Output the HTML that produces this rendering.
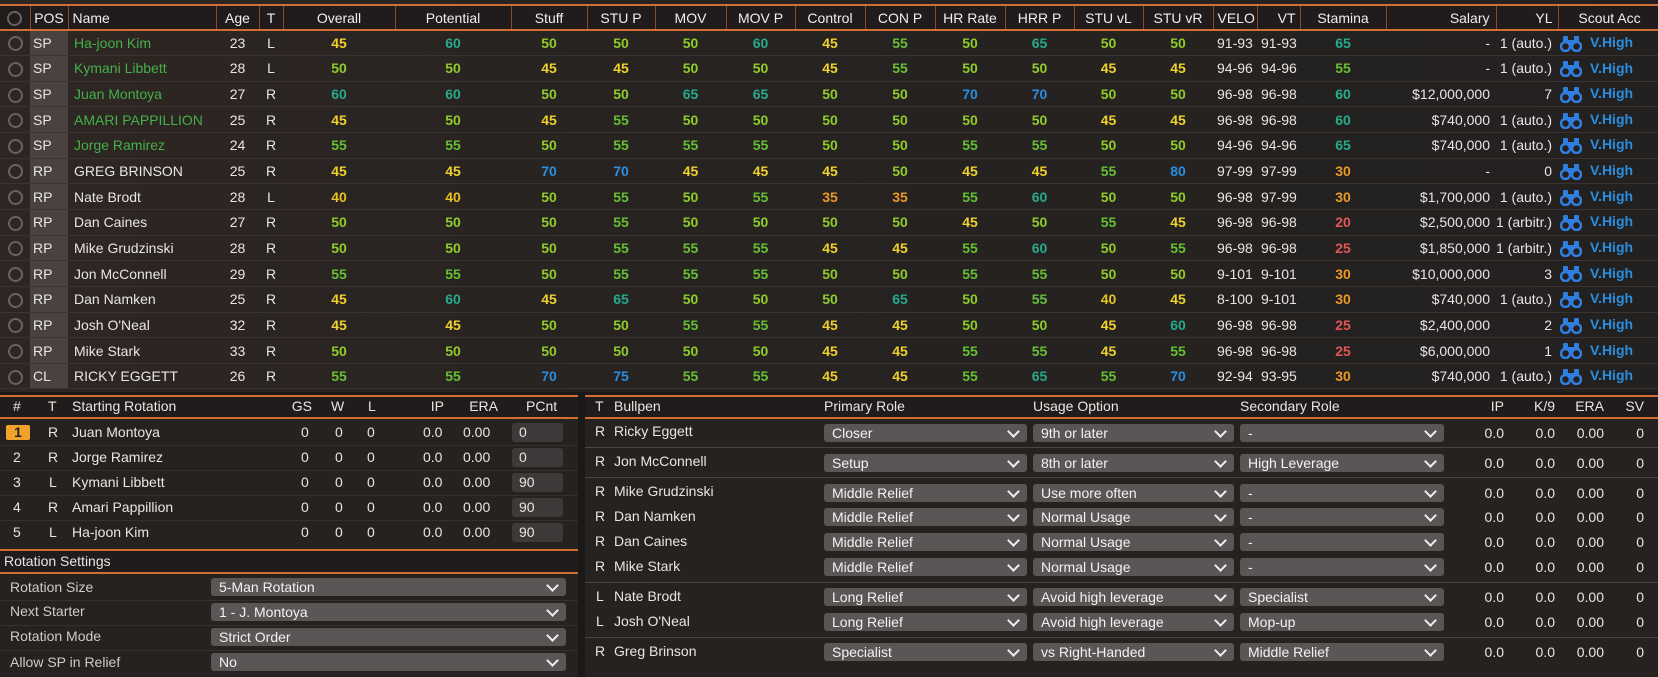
<!DOCTYPE html>
<html><head><meta charset="utf-8"><style>
*{box-sizing:border-box;margin:0;padding:0}
body{width:1658px;height:677px;overflow:hidden;background:#1b1918;font-family:"Liberation Sans",sans-serif;color:#e8e6e4;font-size:14px;position:relative}
.bg{position:absolute;left:0;top:0;width:1658px;height:392px;background:linear-gradient(90deg,#2e2622 0%,#272321 40%,#232120 100%)}
table{border-collapse:collapse;table-layout:fixed;position:absolute}
td,th{white-space:nowrap;overflow:hidden;padding:0}
#top{left:0;top:4px;width:1658px}
#top th{font-weight:normal;height:25px;border-top:2px solid #cf6f35;border-bottom:2px solid #cf6f35;border-right:1px solid #8a4a2a;background:#1f1c1b;color:#eee;font-size:14px;text-align:center}
#top tr.rw td{height:25.65px;border-bottom:1px solid #3a3331;text-align:center;font-weight:bold}
#top tr.rw td.n{text-align:left;padding-left:6px;font-weight:normal}
#top tr.rw td.g{color:#45b04a}
#top tr.rw td.pos{background:#4a4240;text-align:left;padding-left:3px;font-weight:normal}
#top tr.rw td.pl{font-weight:normal}
#top tr.rw td.ve{text-align:left;font-weight:normal;padding-left:4px}
#top tr.rw td.rt{text-align:right;font-weight:normal;padding-right:6px}
#top tr.rw td.sc{text-align:left;color:#2a8ee0}
.cir{display:inline-block;width:15px;height:15px;border:2px solid #6a625e;border-radius:50%;vertical-align:middle}
.a{color:#efd12e}.b{color:#8fcc2a}.c{color:#66c034}.d{color:#25ab8c}.e{color:#2a8ee0}.f{color:#eb9a26}.h{color:#e25656}.k{color:#e6c21e}
.bin{display:inline-block;vertical-align:middle;margin:0 8px 0 2px}
.panel{position:absolute;background:#262220}
.ol{position:absolute;height:2px;background:#cf6f35}
.sep{position:absolute;height:1px;background:#4a4442}
.t{position:absolute;white-space:nowrap;line-height:18px}
.r{text-align:right}
.dd{position:absolute;height:18px;background:#5b5655;border-radius:3px;color:#f2f2f2;padding-left:8px;line-height:18px;font-size:14px}
.dd:after{content:"";position:absolute;right:9px;top:3px;width:7px;height:7px;border-right:2px solid #eee;border-bottom:2px solid #eee;transform:rotate(45deg)}
.pc{position:absolute;width:51px;height:19px;background:#3e3a39;border-radius:3px;padding-left:7px;line-height:19px}
</style></head><body>
<div class="bg"></div>
<table id="top">
<colgroup><col style="width:30px"><col style="width:38px"><col style="width:148px"><col style="width:43px"><col style="width:24px"><col style="width:112px"><col style="width:116px"><col style="width:76px"><col style="width:68px"><col style="width:71px"><col style="width:69px"><col style="width:70px"><col style="width:70px"><col style="width:70px"><col style="width:69px"><col style="width:69px"><col style="width:70px"><col style="width:44px"><col style="width:43px"><col style="width:86px"><col style="width:110px"><col style="width:62px"><col style="width:103px"></colgroup>
<tr><th><span class="cir"></span></th><th>POS</th><th style="text-align:left;padding-left:4px">Name</th><th>Age</th><th>T</th><th>Overall</th><th>Potential</th><th>Stuff</th><th>STU P</th><th>MOV</th><th>MOV P</th><th>Control</th><th>CON P</th><th>HR Rate</th><th>HRR P</th><th>STU vL</th><th>STU vR</th><th style="text-align:left;padding-left:4px">VELO</th><th style="text-align:right;padding-right:4px">VT</th><th>Stamina</th><th style="text-align:right;padding-right:6px">Salary</th><th style="text-align:right;padding-right:5px">YL</th><th>Scout Acc</th></tr>
<tr class="rw"><td><span class="cir"></span></td><td class="pos">SP</td><td class="n g">Ha-joon Kim</td><td class="pl">23</td><td class="pl">L</td><td class="a">45</td><td class="d">60</td><td class="b">50</td><td class="b">50</td><td class="b">50</td><td class="d">60</td><td class="a">45</td><td class="c">55</td><td class="b">50</td><td class="d">65</td><td class="b">50</td><td class="b">50</td><td class="ve">91-93</td><td class="ve">91-93</td><td class="d">65</td><td class="rt">-</td><td class="rt">1 (auto.)</td><td class="sc"><svg class="bin" width="22" height="17" viewBox="0 0 22 17"><rect x="3" y="1" width="5" height="6" rx="1" fill="#2f7ee0"/><rect x="14" y="1" width="5" height="6" rx="1" fill="#2f7ee0"/><rect x="8" y="5" width="6" height="5" fill="#2f7ee0"/><circle cx="5.5" cy="11.5" r="4.5" fill="none" stroke="#2f7ee0" stroke-width="2.5"/><circle cx="16.5" cy="11.5" r="4.5" fill="none" stroke="#2f7ee0" stroke-width="2.5"/></svg>V.High</td></tr>
<tr class="rw"><td><span class="cir"></span></td><td class="pos">SP</td><td class="n g">Kymani Libbett</td><td class="pl">28</td><td class="pl">L</td><td class="b">50</td><td class="b">50</td><td class="a">45</td><td class="a">45</td><td class="b">50</td><td class="b">50</td><td class="a">45</td><td class="c">55</td><td class="b">50</td><td class="b">50</td><td class="a">45</td><td class="a">45</td><td class="ve">94-96</td><td class="ve">94-96</td><td class="c">55</td><td class="rt">-</td><td class="rt">1 (auto.)</td><td class="sc"><svg class="bin" width="22" height="17" viewBox="0 0 22 17"><rect x="3" y="1" width="5" height="6" rx="1" fill="#2f7ee0"/><rect x="14" y="1" width="5" height="6" rx="1" fill="#2f7ee0"/><rect x="8" y="5" width="6" height="5" fill="#2f7ee0"/><circle cx="5.5" cy="11.5" r="4.5" fill="none" stroke="#2f7ee0" stroke-width="2.5"/><circle cx="16.5" cy="11.5" r="4.5" fill="none" stroke="#2f7ee0" stroke-width="2.5"/></svg>V.High</td></tr>
<tr class="rw"><td><span class="cir"></span></td><td class="pos">SP</td><td class="n g">Juan Montoya</td><td class="pl">27</td><td class="pl">R</td><td class="d">60</td><td class="d">60</td><td class="b">50</td><td class="b">50</td><td class="d">65</td><td class="d">65</td><td class="b">50</td><td class="b">50</td><td class="e">70</td><td class="e">70</td><td class="b">50</td><td class="b">50</td><td class="ve">96-98</td><td class="ve">96-98</td><td class="d">60</td><td class="rt">$12,000,000</td><td class="rt">7</td><td class="sc"><svg class="bin" width="22" height="17" viewBox="0 0 22 17"><rect x="3" y="1" width="5" height="6" rx="1" fill="#2f7ee0"/><rect x="14" y="1" width="5" height="6" rx="1" fill="#2f7ee0"/><rect x="8" y="5" width="6" height="5" fill="#2f7ee0"/><circle cx="5.5" cy="11.5" r="4.5" fill="none" stroke="#2f7ee0" stroke-width="2.5"/><circle cx="16.5" cy="11.5" r="4.5" fill="none" stroke="#2f7ee0" stroke-width="2.5"/></svg>V.High</td></tr>
<tr class="rw"><td><span class="cir"></span></td><td class="pos">SP</td><td class="n g">AMARI PAPPILLION</td><td class="pl">25</td><td class="pl">R</td><td class="a">45</td><td class="b">50</td><td class="a">45</td><td class="c">55</td><td class="b">50</td><td class="b">50</td><td class="b">50</td><td class="b">50</td><td class="b">50</td><td class="b">50</td><td class="a">45</td><td class="a">45</td><td class="ve">96-98</td><td class="ve">96-98</td><td class="d">60</td><td class="rt">$740,000</td><td class="rt">1 (auto.)</td><td class="sc"><svg class="bin" width="22" height="17" viewBox="0 0 22 17"><rect x="3" y="1" width="5" height="6" rx="1" fill="#2f7ee0"/><rect x="14" y="1" width="5" height="6" rx="1" fill="#2f7ee0"/><rect x="8" y="5" width="6" height="5" fill="#2f7ee0"/><circle cx="5.5" cy="11.5" r="4.5" fill="none" stroke="#2f7ee0" stroke-width="2.5"/><circle cx="16.5" cy="11.5" r="4.5" fill="none" stroke="#2f7ee0" stroke-width="2.5"/></svg>V.High</td></tr>
<tr class="rw"><td><span class="cir"></span></td><td class="pos">SP</td><td class="n g">Jorge Ramirez</td><td class="pl">24</td><td class="pl">R</td><td class="c">55</td><td class="c">55</td><td class="b">50</td><td class="c">55</td><td class="c">55</td><td class="c">55</td><td class="b">50</td><td class="b">50</td><td class="c">55</td><td class="c">55</td><td class="b">50</td><td class="b">50</td><td class="ve">94-96</td><td class="ve">94-96</td><td class="d">65</td><td class="rt">$740,000</td><td class="rt">1 (auto.)</td><td class="sc"><svg class="bin" width="22" height="17" viewBox="0 0 22 17"><rect x="3" y="1" width="5" height="6" rx="1" fill="#2f7ee0"/><rect x="14" y="1" width="5" height="6" rx="1" fill="#2f7ee0"/><rect x="8" y="5" width="6" height="5" fill="#2f7ee0"/><circle cx="5.5" cy="11.5" r="4.5" fill="none" stroke="#2f7ee0" stroke-width="2.5"/><circle cx="16.5" cy="11.5" r="4.5" fill="none" stroke="#2f7ee0" stroke-width="2.5"/></svg>V.High</td></tr>
<tr class="rw"><td><span class="cir"></span></td><td class="pos">RP</td><td class="n">GREG BRINSON</td><td class="pl">25</td><td class="pl">R</td><td class="a">45</td><td class="a">45</td><td class="e">70</td><td class="e">70</td><td class="a">45</td><td class="a">45</td><td class="a">45</td><td class="b">50</td><td class="a">45</td><td class="a">45</td><td class="c">55</td><td class="e">80</td><td class="ve">97-99</td><td class="ve">97-99</td><td class="f">30</td><td class="rt">-</td><td class="rt">0</td><td class="sc"><svg class="bin" width="22" height="17" viewBox="0 0 22 17"><rect x="3" y="1" width="5" height="6" rx="1" fill="#2f7ee0"/><rect x="14" y="1" width="5" height="6" rx="1" fill="#2f7ee0"/><rect x="8" y="5" width="6" height="5" fill="#2f7ee0"/><circle cx="5.5" cy="11.5" r="4.5" fill="none" stroke="#2f7ee0" stroke-width="2.5"/><circle cx="16.5" cy="11.5" r="4.5" fill="none" stroke="#2f7ee0" stroke-width="2.5"/></svg>V.High</td></tr>
<tr class="rw"><td><span class="cir"></span></td><td class="pos">RP</td><td class="n">Nate Brodt</td><td class="pl">28</td><td class="pl">L</td><td class="k">40</td><td class="k">40</td><td class="b">50</td><td class="c">55</td><td class="b">50</td><td class="c">55</td><td class="f">35</td><td class="f">35</td><td class="c">55</td><td class="d">60</td><td class="b">50</td><td class="b">50</td><td class="ve">96-98</td><td class="ve">97-99</td><td class="f">30</td><td class="rt">$1,700,000</td><td class="rt">1 (auto.)</td><td class="sc"><svg class="bin" width="22" height="17" viewBox="0 0 22 17"><rect x="3" y="1" width="5" height="6" rx="1" fill="#2f7ee0"/><rect x="14" y="1" width="5" height="6" rx="1" fill="#2f7ee0"/><rect x="8" y="5" width="6" height="5" fill="#2f7ee0"/><circle cx="5.5" cy="11.5" r="4.5" fill="none" stroke="#2f7ee0" stroke-width="2.5"/><circle cx="16.5" cy="11.5" r="4.5" fill="none" stroke="#2f7ee0" stroke-width="2.5"/></svg>V.High</td></tr>
<tr class="rw"><td><span class="cir"></span></td><td class="pos">RP</td><td class="n">Dan Caines</td><td class="pl">27</td><td class="pl">R</td><td class="b">50</td><td class="b">50</td><td class="b">50</td><td class="c">55</td><td class="b">50</td><td class="b">50</td><td class="b">50</td><td class="b">50</td><td class="a">45</td><td class="b">50</td><td class="c">55</td><td class="a">45</td><td class="ve">96-98</td><td class="ve">96-98</td><td class="h">20</td><td class="rt">$2,500,000</td><td class="rt">1 (arbitr.)</td><td class="sc"><svg class="bin" width="22" height="17" viewBox="0 0 22 17"><rect x="3" y="1" width="5" height="6" rx="1" fill="#2f7ee0"/><rect x="14" y="1" width="5" height="6" rx="1" fill="#2f7ee0"/><rect x="8" y="5" width="6" height="5" fill="#2f7ee0"/><circle cx="5.5" cy="11.5" r="4.5" fill="none" stroke="#2f7ee0" stroke-width="2.5"/><circle cx="16.5" cy="11.5" r="4.5" fill="none" stroke="#2f7ee0" stroke-width="2.5"/></svg>V.High</td></tr>
<tr class="rw"><td><span class="cir"></span></td><td class="pos">RP</td><td class="n">Mike Grudzinski</td><td class="pl">28</td><td class="pl">R</td><td class="b">50</td><td class="b">50</td><td class="b">50</td><td class="c">55</td><td class="c">55</td><td class="c">55</td><td class="a">45</td><td class="a">45</td><td class="c">55</td><td class="d">60</td><td class="b">50</td><td class="c">55</td><td class="ve">96-98</td><td class="ve">96-98</td><td class="h">25</td><td class="rt">$1,850,000</td><td class="rt">1 (arbitr.)</td><td class="sc"><svg class="bin" width="22" height="17" viewBox="0 0 22 17"><rect x="3" y="1" width="5" height="6" rx="1" fill="#2f7ee0"/><rect x="14" y="1" width="5" height="6" rx="1" fill="#2f7ee0"/><rect x="8" y="5" width="6" height="5" fill="#2f7ee0"/><circle cx="5.5" cy="11.5" r="4.5" fill="none" stroke="#2f7ee0" stroke-width="2.5"/><circle cx="16.5" cy="11.5" r="4.5" fill="none" stroke="#2f7ee0" stroke-width="2.5"/></svg>V.High</td></tr>
<tr class="rw"><td><span class="cir"></span></td><td class="pos">RP</td><td class="n">Jon McConnell</td><td class="pl">29</td><td class="pl">R</td><td class="c">55</td><td class="c">55</td><td class="b">50</td><td class="c">55</td><td class="c">55</td><td class="c">55</td><td class="b">50</td><td class="b">50</td><td class="c">55</td><td class="c">55</td><td class="b">50</td><td class="b">50</td><td class="ve">9-101</td><td class="ve">9-101</td><td class="f">30</td><td class="rt">$10,000,000</td><td class="rt">3</td><td class="sc"><svg class="bin" width="22" height="17" viewBox="0 0 22 17"><rect x="3" y="1" width="5" height="6" rx="1" fill="#2f7ee0"/><rect x="14" y="1" width="5" height="6" rx="1" fill="#2f7ee0"/><rect x="8" y="5" width="6" height="5" fill="#2f7ee0"/><circle cx="5.5" cy="11.5" r="4.5" fill="none" stroke="#2f7ee0" stroke-width="2.5"/><circle cx="16.5" cy="11.5" r="4.5" fill="none" stroke="#2f7ee0" stroke-width="2.5"/></svg>V.High</td></tr>
<tr class="rw"><td><span class="cir"></span></td><td class="pos">RP</td><td class="n">Dan Namken</td><td class="pl">25</td><td class="pl">R</td><td class="a">45</td><td class="d">60</td><td class="a">45</td><td class="d">65</td><td class="b">50</td><td class="b">50</td><td class="b">50</td><td class="d">65</td><td class="b">50</td><td class="c">55</td><td class="k">40</td><td class="a">45</td><td class="ve">8-100</td><td class="ve">9-101</td><td class="f">30</td><td class="rt">$740,000</td><td class="rt">1 (auto.)</td><td class="sc"><svg class="bin" width="22" height="17" viewBox="0 0 22 17"><rect x="3" y="1" width="5" height="6" rx="1" fill="#2f7ee0"/><rect x="14" y="1" width="5" height="6" rx="1" fill="#2f7ee0"/><rect x="8" y="5" width="6" height="5" fill="#2f7ee0"/><circle cx="5.5" cy="11.5" r="4.5" fill="none" stroke="#2f7ee0" stroke-width="2.5"/><circle cx="16.5" cy="11.5" r="4.5" fill="none" stroke="#2f7ee0" stroke-width="2.5"/></svg>V.High</td></tr>
<tr class="rw"><td><span class="cir"></span></td><td class="pos">RP</td><td class="n">Josh O'Neal</td><td class="pl">32</td><td class="pl">R</td><td class="a">45</td><td class="a">45</td><td class="b">50</td><td class="b">50</td><td class="c">55</td><td class="c">55</td><td class="a">45</td><td class="a">45</td><td class="b">50</td><td class="b">50</td><td class="a">45</td><td class="d">60</td><td class="ve">96-98</td><td class="ve">96-98</td><td class="h">25</td><td class="rt">$2,400,000</td><td class="rt">2</td><td class="sc"><svg class="bin" width="22" height="17" viewBox="0 0 22 17"><rect x="3" y="1" width="5" height="6" rx="1" fill="#2f7ee0"/><rect x="14" y="1" width="5" height="6" rx="1" fill="#2f7ee0"/><rect x="8" y="5" width="6" height="5" fill="#2f7ee0"/><circle cx="5.5" cy="11.5" r="4.5" fill="none" stroke="#2f7ee0" stroke-width="2.5"/><circle cx="16.5" cy="11.5" r="4.5" fill="none" stroke="#2f7ee0" stroke-width="2.5"/></svg>V.High</td></tr>
<tr class="rw"><td><span class="cir"></span></td><td class="pos">RP</td><td class="n">Mike Stark</td><td class="pl">33</td><td class="pl">R</td><td class="b">50</td><td class="b">50</td><td class="b">50</td><td class="b">50</td><td class="b">50</td><td class="b">50</td><td class="a">45</td><td class="a">45</td><td class="c">55</td><td class="c">55</td><td class="a">45</td><td class="c">55</td><td class="ve">96-98</td><td class="ve">96-98</td><td class="h">25</td><td class="rt">$6,000,000</td><td class="rt">1</td><td class="sc"><svg class="bin" width="22" height="17" viewBox="0 0 22 17"><rect x="3" y="1" width="5" height="6" rx="1" fill="#2f7ee0"/><rect x="14" y="1" width="5" height="6" rx="1" fill="#2f7ee0"/><rect x="8" y="5" width="6" height="5" fill="#2f7ee0"/><circle cx="5.5" cy="11.5" r="4.5" fill="none" stroke="#2f7ee0" stroke-width="2.5"/><circle cx="16.5" cy="11.5" r="4.5" fill="none" stroke="#2f7ee0" stroke-width="2.5"/></svg>V.High</td></tr>
<tr class="rw"><td><span class="cir"></span></td><td class="pos">CL</td><td class="n">RICKY EGGETT</td><td class="pl">26</td><td class="pl">R</td><td class="c">55</td><td class="c">55</td><td class="e">70</td><td class="e">75</td><td class="c">55</td><td class="c">55</td><td class="a">45</td><td class="a">45</td><td class="c">55</td><td class="d">65</td><td class="c">55</td><td class="e">70</td><td class="ve">92-94</td><td class="ve">93-95</td><td class="f">30</td><td class="rt">$740,000</td><td class="rt">1 (auto.)</td><td class="sc"><svg class="bin" width="22" height="17" viewBox="0 0 22 17"><rect x="3" y="1" width="5" height="6" rx="1" fill="#2f7ee0"/><rect x="14" y="1" width="5" height="6" rx="1" fill="#2f7ee0"/><rect x="8" y="5" width="6" height="5" fill="#2f7ee0"/><circle cx="5.5" cy="11.5" r="4.5" fill="none" stroke="#2f7ee0" stroke-width="2.5"/><circle cx="16.5" cy="11.5" r="4.5" fill="none" stroke="#2f7ee0" stroke-width="2.5"/></svg>V.High</td></tr>
</table>

<!-- bottom left -->
<div class="panel" style="left:0;top:396px;width:578px;height:281px"></div>
<div class="panel" style="left:0;top:396px;width:578px;height:22px;background:#1f1c1b"></div>
<div class="ol" style="left:0;top:395px;width:578px"></div>
<div class="ol" style="left:0;top:417px;width:578px"></div>
<div class="t" style="left:13px;top:397px">#</div><div class="t" style="left:48px;top:397px">T</div><div class="t" style="left:72px;top:397px">Starting Rotation</div>
<div class="t r" style="left:270px;top:397px;width:42px">GS</div><div class="t" style="left:331px;top:397px">W</div><div class="t" style="left:368px;top:397px">L</div>
<div class="t r" style="left:400px;top:397px;width:44px">IP</div><div class="t r" style="left:450px;top:397px;width:48px">ERA</div><div class="t" style="left:526px;top:397px">PCnt</div>

<div style="position:absolute;left:6px;top:425px;width:24px;height:15px;background:#f0a22a;border-radius:2px;color:#222;text-align:center;line-height:15px;font-weight:bold">1</div>
<div class="t" style="left:48px;top:423px">R</div><div class="t" style="left:72px;top:423px">Juan Montoya</div><div class="t" style="left:301px;top:423px">0</div><div class="t" style="left:335px;top:423px">0</div><div class="t" style="left:367px;top:423px">0</div><div class="t" style="left:423px;top:423px">0.0</div><div class="t" style="left:463px;top:423px">0.00</div><div class="pc" style="left:512px;top:423px">0</div>
<div class="sep" style="left:0;top:445px;width:578px;background:#36302e"></div>
<div class="t" style="left:13px;top:448px">2</div><div class="t" style="left:48px;top:448px">R</div><div class="t" style="left:72px;top:448px">Jorge Ramirez</div><div class="t" style="left:301px;top:448px">0</div><div class="t" style="left:335px;top:448px">0</div><div class="t" style="left:367px;top:448px">0</div><div class="t" style="left:423px;top:448px">0.0</div><div class="t" style="left:463px;top:448px">0.00</div><div class="pc" style="left:512px;top:448px">0</div>
<div class="sep" style="left:0;top:470px;width:578px;background:#36302e"></div>
<div class="t" style="left:13px;top:473px">3</div><div class="t" style="left:49px;top:473px">L</div><div class="t" style="left:72px;top:473px">Kymani Libbett</div><div class="t" style="left:301px;top:473px">0</div><div class="t" style="left:335px;top:473px">0</div><div class="t" style="left:367px;top:473px">0</div><div class="t" style="left:423px;top:473px">0.0</div><div class="t" style="left:463px;top:473px">0.00</div><div class="pc" style="left:512px;top:473px">90</div>
<div class="sep" style="left:0;top:495px;width:578px;background:#36302e"></div>
<div class="t" style="left:13px;top:498px">4</div><div class="t" style="left:48px;top:498px">R</div><div class="t" style="left:72px;top:498px">Amari Pappillion</div><div class="t" style="left:301px;top:498px">0</div><div class="t" style="left:335px;top:498px">0</div><div class="t" style="left:367px;top:498px">0</div><div class="t" style="left:423px;top:498px">0.0</div><div class="t" style="left:463px;top:498px">0.00</div><div class="pc" style="left:512px;top:498px">90</div>
<div class="sep" style="left:0;top:520px;width:578px;background:#36302e"></div>
<div class="t" style="left:13px;top:523px">5</div><div class="t" style="left:49px;top:523px">L</div><div class="t" style="left:72px;top:523px">Ha-joon Kim</div><div class="t" style="left:301px;top:523px">0</div><div class="t" style="left:335px;top:523px">0</div><div class="t" style="left:367px;top:523px">0</div><div class="t" style="left:423px;top:523px">0.0</div><div class="t" style="left:463px;top:523px">0.00</div><div class="pc" style="left:512px;top:523px">90</div>

<div class="panel" style="left:0;top:551px;width:578px;height:22px;background:#1f1c1b"></div>
<div class="ol" style="left:0;top:549px;width:578px"></div>
<div class="ol" style="left:0;top:572px;width:578px"></div>
<div class="t" style="left:4px;top:552px">Rotation Settings</div>
<div class="t" style="left:10px;top:578px;color:#cfcbc8">Rotation Size</div><div class="dd" style="left:211px;top:578px;width:355px">5-Man Rotation</div>
<div class="sep" style="left:0;top:600px;width:578px;background:#36302e"></div>
<div class="t" style="left:10px;top:602px;color:#cfcbc8">Next Starter</div><div class="dd" style="left:211px;top:603px;width:355px">1 - J. Montoya</div>
<div class="sep" style="left:0;top:625px;width:578px;background:#36302e"></div>
<div class="t" style="left:10px;top:627px;color:#cfcbc8">Rotation Mode</div><div class="dd" style="left:211px;top:628px;width:355px">Strict Order</div>
<div class="sep" style="left:0;top:650px;width:578px;background:#36302e"></div>
<div class="t" style="left:10px;top:653px;color:#cfcbc8">Allow SP in Relief</div><div class="dd" style="left:211px;top:653px;width:355px">No</div>

<!-- bottom right -->
<div class="panel" style="left:585px;top:396px;width:1073px;height:281px"></div>
<div class="panel" style="left:585px;top:396px;width:1073px;height:22px;background:#1f1c1b"></div>
<div class="ol" style="left:585px;top:395px;width:1073px"></div>
<div class="ol" style="left:585px;top:417px;width:1073px"></div>
<div class="t" style="left:595px;top:397px">T</div><div class="t" style="left:614px;top:397px">Bullpen</div><div class="t" style="left:824px;top:397px">Primary Role</div><div class="t" style="left:1033px;top:397px">Usage Option</div><div class="t" style="left:1240px;top:397px">Secondary Role</div>
<div class="t r" style="left:1470px;top:397px;width:34px">IP</div><div class="t r" style="left:1515px;top:397px;width:40px">K/9</div><div class="t r" style="left:1560px;top:397px;width:44px">ERA</div><div class="t r" style="left:1610px;top:397px;width:34px">SV</div>

<div class="t" style="left:595px;top:422px">R</div><div class="t" style="left:614px;top:422px">Ricky Eggett</div><div class="dd" style="left:824px;top:424px;width:203px">Closer</div><div class="dd" style="left:1033px;top:424px;width:201px">9th or later</div><div class="dd" style="left:1240px;top:424px;width:204px">-</div><div class="t r" style="left:1470px;top:424px;width:34px">0.0</div><div class="t r" style="left:1515px;top:424px;width:40px">0.0</div><div class="t r" style="left:1560px;top:424px;width:44px">0.00</div><div class="t r" style="left:1610px;top:424px;width:34px">0</div>
<div class="sep" style="left:585px;top:447px;width:1073px"></div>
<div class="t" style="left:595px;top:452px">R</div><div class="t" style="left:614px;top:452px">Jon McConnell</div><div class="dd" style="left:824px;top:454px;width:203px">Setup</div><div class="dd" style="left:1033px;top:454px;width:201px">8th or later</div><div class="dd" style="left:1240px;top:454px;width:204px">High Leverage</div><div class="t r" style="left:1470px;top:454px;width:34px">0.0</div><div class="t r" style="left:1515px;top:454px;width:40px">0.0</div><div class="t r" style="left:1560px;top:454px;width:44px">0.00</div><div class="t r" style="left:1610px;top:454px;width:34px">0</div>
<div class="sep" style="left:585px;top:477px;width:1073px"></div>
<div class="t" style="left:595px;top:482px">R</div><div class="t" style="left:614px;top:482px">Mike Grudzinski</div><div class="dd" style="left:824px;top:484px;width:203px">Middle Relief</div><div class="dd" style="left:1033px;top:484px;width:201px">Use more often</div><div class="dd" style="left:1240px;top:484px;width:204px">-</div><div class="t r" style="left:1470px;top:484px;width:34px">0.0</div><div class="t r" style="left:1515px;top:484px;width:40px">0.0</div><div class="t r" style="left:1560px;top:484px;width:44px">0.00</div><div class="t r" style="left:1610px;top:484px;width:34px">0</div>
<div class="t" style="left:595px;top:507px">R</div><div class="t" style="left:614px;top:507px">Dan Namken</div><div class="dd" style="left:824px;top:508px;width:203px">Middle Relief</div><div class="dd" style="left:1033px;top:508px;width:201px">Normal Usage</div><div class="dd" style="left:1240px;top:508px;width:204px">-</div><div class="t r" style="left:1470px;top:508px;width:34px">0.0</div><div class="t r" style="left:1515px;top:508px;width:40px">0.0</div><div class="t r" style="left:1560px;top:508px;width:44px">0.00</div><div class="t r" style="left:1610px;top:508px;width:34px">0</div>
<div class="t" style="left:595px;top:532px">R</div><div class="t" style="left:614px;top:532px">Dan Caines</div><div class="dd" style="left:824px;top:533px;width:203px">Middle Relief</div><div class="dd" style="left:1033px;top:533px;width:201px">Normal Usage</div><div class="dd" style="left:1240px;top:533px;width:204px">-</div><div class="t r" style="left:1470px;top:533px;width:34px">0.0</div><div class="t r" style="left:1515px;top:533px;width:40px">0.0</div><div class="t r" style="left:1560px;top:533px;width:44px">0.00</div><div class="t r" style="left:1610px;top:533px;width:34px">0</div>
<div class="t" style="left:595px;top:557px">R</div><div class="t" style="left:614px;top:557px">Mike Stark</div><div class="dd" style="left:824px;top:558px;width:203px">Middle Relief</div><div class="dd" style="left:1033px;top:558px;width:201px">Normal Usage</div><div class="dd" style="left:1240px;top:558px;width:204px">-</div><div class="t r" style="left:1470px;top:558px;width:34px">0.0</div><div class="t r" style="left:1515px;top:558px;width:40px">0.0</div><div class="t r" style="left:1560px;top:558px;width:44px">0.00</div><div class="t r" style="left:1610px;top:558px;width:34px">0</div>
<div class="sep" style="left:585px;top:582px;width:1073px"></div>
<div class="t" style="left:596px;top:587px">L</div><div class="t" style="left:614px;top:587px">Nate Brodt</div><div class="dd" style="left:824px;top:588px;width:203px">Long Relief</div><div class="dd" style="left:1033px;top:588px;width:201px">Avoid high leverage</div><div class="dd" style="left:1240px;top:588px;width:204px">Specialist</div><div class="t r" style="left:1470px;top:588px;width:34px">0.0</div><div class="t r" style="left:1515px;top:588px;width:40px">0.0</div><div class="t r" style="left:1560px;top:588px;width:44px">0.00</div><div class="t r" style="left:1610px;top:588px;width:34px">0</div>
<div class="t" style="left:596px;top:612px">L</div><div class="t" style="left:614px;top:612px">Josh O'Neal</div><div class="dd" style="left:824px;top:613px;width:203px">Long Relief</div><div class="dd" style="left:1033px;top:613px;width:201px">Avoid high leverage</div><div class="dd" style="left:1240px;top:613px;width:204px">Mop-up</div><div class="t r" style="left:1470px;top:613px;width:34px">0.0</div><div class="t r" style="left:1515px;top:613px;width:40px">0.0</div><div class="t r" style="left:1560px;top:613px;width:44px">0.00</div><div class="t r" style="left:1610px;top:613px;width:34px">0</div>
<div class="sep" style="left:585px;top:637px;width:1073px"></div>
<div class="t" style="left:595px;top:642px">R</div><div class="t" style="left:614px;top:642px">Greg Brinson</div><div class="dd" style="left:824px;top:643px;width:203px">Specialist</div><div class="dd" style="left:1033px;top:643px;width:201px">vs Right-Handed</div><div class="dd" style="left:1240px;top:643px;width:204px">Middle Relief</div><div class="t r" style="left:1470px;top:643px;width:34px">0.0</div><div class="t r" style="left:1515px;top:643px;width:40px">0.0</div><div class="t r" style="left:1560px;top:643px;width:44px">0.00</div><div class="t r" style="left:1610px;top:643px;width:34px">0</div>
</body></html>
